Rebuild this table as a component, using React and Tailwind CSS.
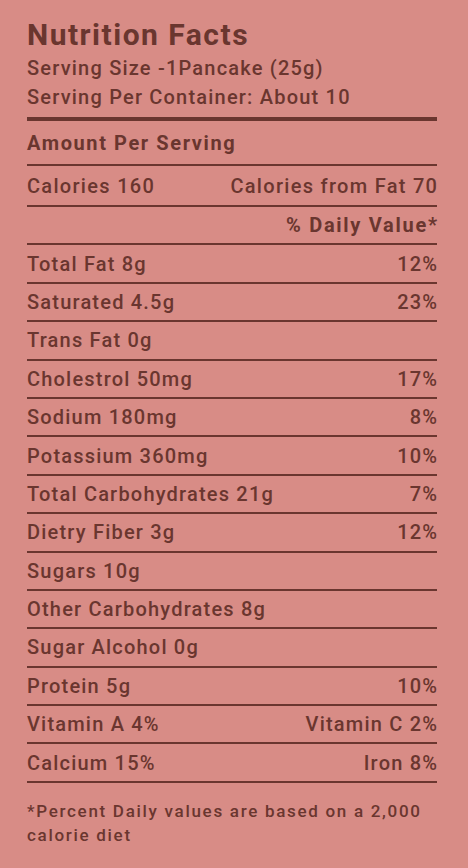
export default function App() {
  const rows = [
    ["Total Fat 8g", "12%"],
    ["Saturated 4.5g", "23%"],
    ["Trans Fat 0g", ""],
    ["Cholestrol 50mg", "17%"],
    ["Sodium 180mg", "8%"],
    ["Potassium 360mg", "10%"],
    ["Total Carbohydrates 21g", "7%"],
    ["Dietry Fiber 3g", "12%"],
    ["Sugars 10g", ""],
    ["Other Carbohydrates 8g", ""],
    ["Sugar Alcohol 0g", ""],
    ["Protein 5g", "10%"],
    ["Vitamin A 4%", "Vitamin C 2%"],
    ["Calcium 15%", "Iron 8%"],
  ];
  return (
    <div
      className="w-[468px] h-[868px] bg-[#d88c86] text-[#6a362f] pl-[27px] pr-[31px] pt-[16px]"
      style={{ fontFamily: "Roboto, 'Liberation Sans', sans-serif" }}
    >
      <div className="text-[30px] font-bold leading-[38px] tracking-[1.5px]">Nutrition Facts</div>
      <div className="text-[20px] font-medium leading-[29px] tracking-[1.2px]">Serving Size -1Pancake (25g)</div>
      <div className="text-[20px] font-medium leading-[29px] tracking-[1.2px]">Serving Per Container: About 10</div>
      <div className="h-[4px] bg-[#6a362f] mt-[5px]" />
      <div className="h-[45px] flex items-center text-[20px] font-bold tracking-[1.6px] border-b-2 border-[#6a362f]">
        Amount Per Serving
      </div>
      <div className="h-[41px] flex items-center justify-between text-[20px] font-medium tracking-[1.3px] border-b-2 border-[#6a362f]">
        <span>Calories 160</span>
        <span className="-mr-[1.3px]">Calories from Fat 70</span>
      </div>
      <div className="h-[38.4px] flex items-center justify-end text-[20px] font-bold tracking-[1.7px] border-b-2 border-[#6a362f]">
        <span className="-mr-[1.7px]">% Daily Value*</span>
      </div>
      {rows.map(([l, r], i) => (
        <div
          key={i}
          className="h-[38.4px] flex items-center justify-between text-[20px] font-medium tracking-[1.2px] border-b-2 border-[#6a362f]"
        >
          <span>{l}</span>
          <span className="-mr-[1.2px]">{r}</span>
        </div>
      ))}
      <div className="mt-[16px] text-[17px] font-medium leading-[24px] tracking-[1.7px]">
        *Percent Daily values are based on a 2,000 calorie diet
      </div>
    </div>
  );
}
